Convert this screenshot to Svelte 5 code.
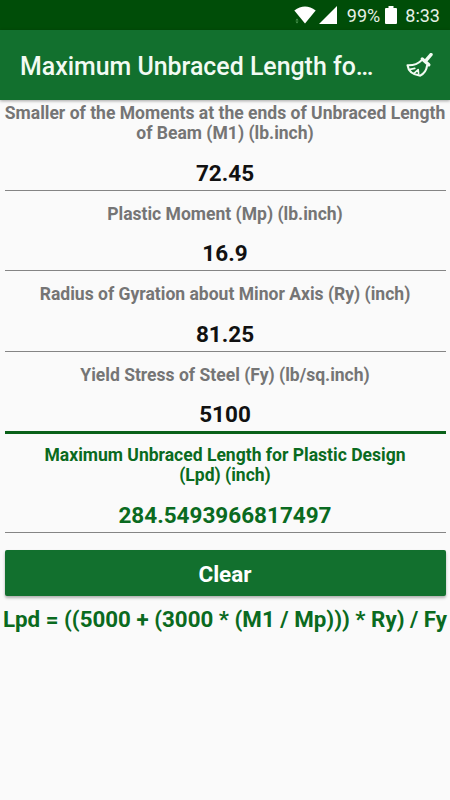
<script lang="ts">
  type Field = { label: string; value: string; focused?: boolean; result?: boolean };

  const title = "Maximum Unbraced Length fo…";
  const formula = "Lpd = ((5000 + (3000 * (M1 / Mp))) * Ry) / Fy";

  const initial: Field[] = [
    {
      label: "Smaller of the Moments at the ends of Unbraced Length\nof Beam (M1) (lb.inch)",
      value: "72.45",
    },
    { label: "Plastic Moment (Mp) (lb.inch)", value: "16.9" },
    { label: "Radius of Gyration about Minor Axis (Ry) (inch)", value: "81.25" },
    { label: "Yield Stress of Steel (Fy) (lb/sq.inch)", value: "5100", focused: true },
    {
      label: "Maximum Unbraced Length for Plastic Design\n(Lpd) (inch)",
      value: "284.5493966817497",
      result: true,
    },
  ];

  let fields = $state(initial);

  function clear() {
    for (const field of fields) field.value = "";
  }
</script>

<div class="screen">
  <div class="status-bar">
    <svg class="wifi" viewBox="0 0 22 18" aria-hidden="true">
      <path d="M0.3 4.6Q11 -3.8 21.7 4.6L11 17.6Z" fill="#fff" />
      <path d="M1.5 14.5 3 12.5 4.5 14.5ZM1.5 15.5 3 17.5 4.5 15.5Z" fill="#4f9a55" />
    </svg>
    <svg class="signal" viewBox="0 0 18 18" aria-hidden="true">
      <path d="M18 0V18H0Z" fill="#fff" />
    </svg>
    <span class="percent">99%</span>
    <svg class="battery" viewBox="0 0 12 18" aria-hidden="true">
      <path d="M3.5 0h5v2H11a1 1 0 0 1 1 1v14a1 1 0 0 1-1 1H1a1 1 0 0 1-1-1V3a1 1 0 0 1 1-1h2.5Z" fill="#fff" />
    </svg>
    <span class="time">8:33</span>
  </div>

  <header class="app-bar">
    <h1>{title}</h1>
    <button class="broom" aria-label="Clear all" onclick={clear}>
      <svg viewBox="0 0 28 26" fill="none" stroke="#f2fbf3" stroke-linecap="round" stroke-linejoin="round">
        <path d="M20.5 6.8 25 1.6" stroke-width="3.4" />
        <path d="M16.3 6 22.8 11.8" stroke-width="3.4" />
        <path d="M15.2 7.6C11.5 11.6 6.5 12.4 1.5 12.2C2.2 17.8 6.5 21.8 14.2 22.6C18.3 20.3 20.5 17.2 21 12.8" stroke-width="2.1" />
        <path d="M4 16.4 8.8 15.4M8 20.4 12.2 16.6 12.6 20.6" stroke-width="1.6" />
      </svg>
    </button>
  </header>

  <main>
    {#each fields as field}
      <div class="field" class:focused={field.focused} class:result={field.result}>
        <div class="label">{field.label}</div>
        <div class="value">{field.value}</div>
      </div>
    {/each}
    <button class="clear" onclick={clear}>Clear</button>
    <div class="formula">{formula}</div>
  </main>
</div>

<style>
  :global(body) {
    background: #fafafa;
  }

  .screen {
    height: 800px;
    overflow: hidden;
    background: #fafafa;
    font-family: Roboto, sans-serif;
  }

  .status-bar {
    display: flex;
    align-items: center;
    justify-content: flex-end;
    box-sizing: border-box;
    height: 30px;
    padding-right: 10px;
    background: #004d08;
    color: #e6f0e6;
    font-size: 18px;
    line-height: 30px;
  }
  .wifi {
    width: 22px;
    height: 18px;
    margin-right: 3px;
  }
  .signal {
    width: 18px;
    height: 18px;
    margin-right: 10px;
  }
  .percent {
    padding-top: 2px;
    margin-right: 5px;
  }
  .battery {
    width: 12px;
    height: 18px;
    margin-right: 8px;
  }
  .time {
    padding-top: 2px;
  }

  .app-bar {
    display: flex;
    align-items: center;
    justify-content: space-between;
    box-sizing: border-box;
    height: 70px;
    padding: 2px 16px 0 20px;
    background: #12702e;
    box-shadow: 0 1px 3px rgba(0, 0, 0, 0.35);
  }
  h1 {
    margin: 0;
    padding-top: 2px;
    color: #f2fbf3;
    font-size: 24.9px;
    font-weight: 500;
    line-height: 30px;
    white-space: nowrap;
  }
  .broom {
    width: 28px;
    height: 26px;
    padding: 0;
    border: 0;
    background: none;
  }
  .broom svg {
    display: block;
    width: 28px;
    height: 26px;
  }

  main {
    padding: 0 4.5px;
    text-align: center;
  }

  .field {
    box-sizing: border-box;
    padding-top: 13px;
    border-bottom: 1px solid #858585;
    color: #757575;
  }
  .field:first-child {
    padding-top: 3px;
  }
  .field.focused {
    border-bottom: 3px solid #0a6119;
  }
  .field.result {
    padding-top: 11px;
    color: #0a6a20;
  }

  .label {
    font-size: 17.55px;
    font-weight: 700;
    line-height: 20.4px;
    white-space: pre;
  }
  .value {
    height: 46px;
    color: #111;
    font-size: 22.5px;
    font-weight: 700;
    line-height: 58px;
  }
  .result .value {
    color: #0a6a20;
  }

  .clear {
    display: block;
    width: 100%;
    height: 46px;
    margin-top: 17px;
    border: 0;
    border-radius: 2px;
    background: #12702e;
    box-shadow: 0 2px 3px rgba(0, 0, 0, 0.3);
    color: #fff;
    font: 700 22.5px/46px Roboto, sans-serif;
  }

  .formula {
    margin: 9px -4px 0;
    color: #0a6a20;
    font-size: 22.35px;
    font-weight: 700;
    line-height: 28px;
    white-space: nowrap;
  }
</style>
